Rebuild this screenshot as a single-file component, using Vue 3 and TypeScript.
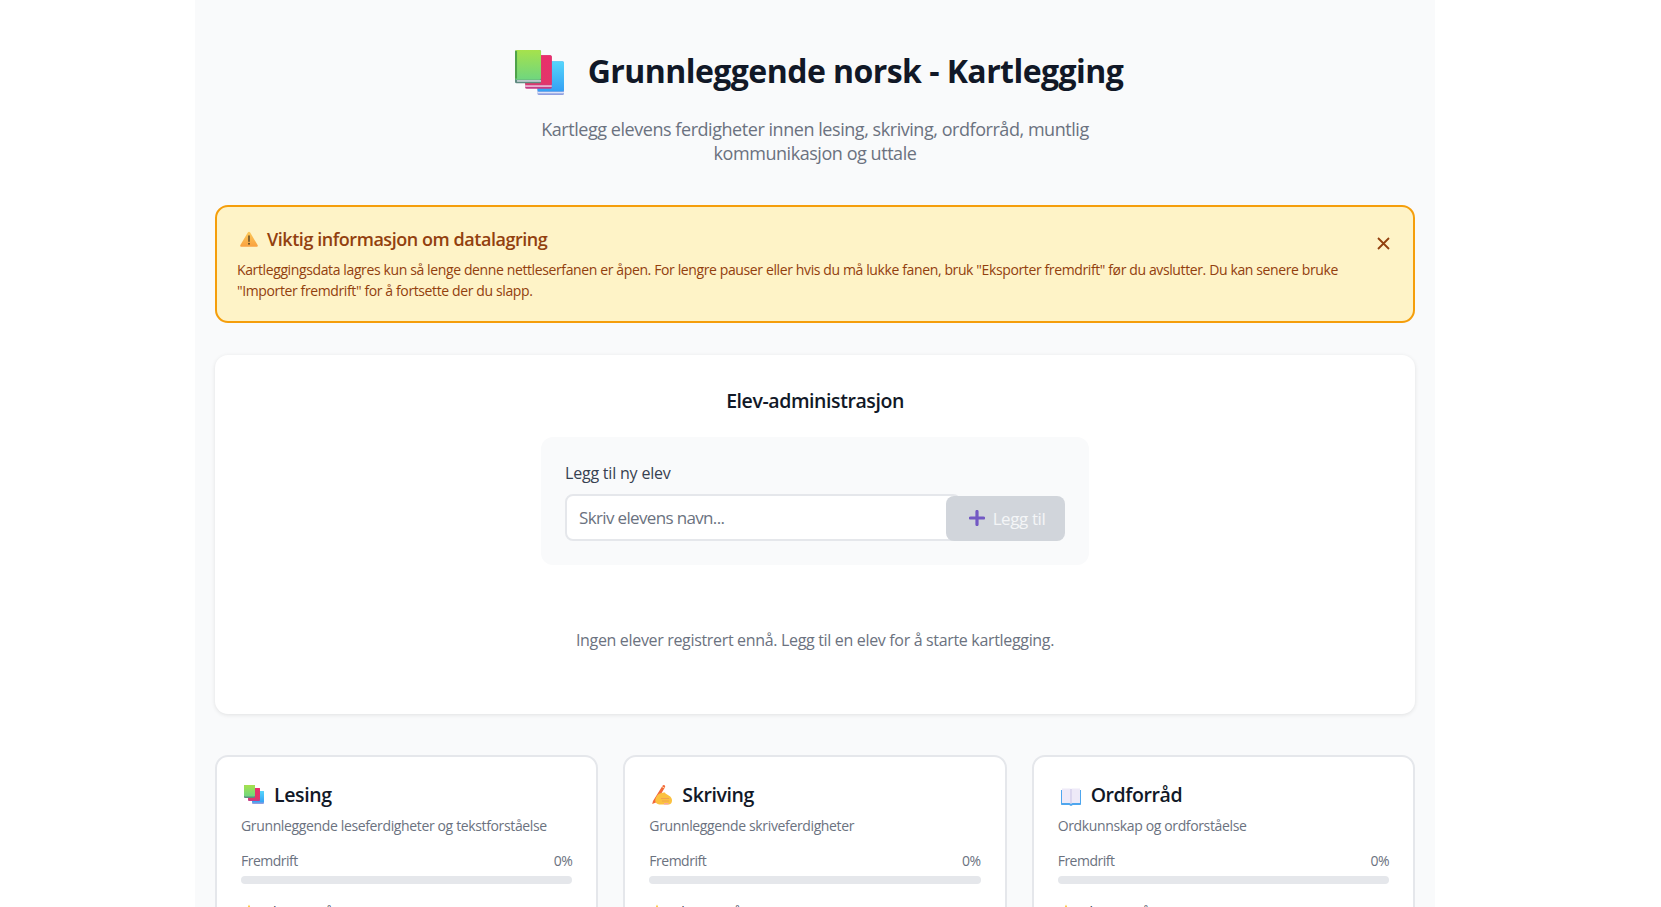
<script setup lang="ts">
import { ref } from 'vue'

interface Area {
  key: string
  title: string
  description: string
  progress: number
}

const areas: Area[] = [
  { key: 'books', title: 'Lesing', description: 'Grunnleggende leseferdigheter og tekstforståelse', progress: 0 },
  { key: 'hand', title: 'Skriving', description: 'Grunnleggende skriveferdigheter', progress: 0 },
  { key: 'book', title: 'Ordforråd', description: 'Ordkunnskap og ordforståelse', progress: 0 }
]

const studentName = ref('')
const showNotice = ref(true)
</script>

<template>
  <div class="page">
    <main class="container">
      <header class="header">
        <h1 class="title">
          <svg class="title-icon" viewBox="0 0 48 45" aria-hidden="true">
            <defs>
              <linearGradient id="bookGreen" x1="0" y1="0" x2="0" y2="1">
                <stop offset="0" stop-color="#a6e24c" />
                <stop offset="1" stop-color="#6fd67f" />
              </linearGradient>
              <linearGradient id="bookRed" x1="0" y1="0" x2="0" y2="1">
                <stop offset="0" stop-color="#ea2f6b" />
                <stop offset="1" stop-color="#e2366a" />
              </linearGradient>
              <linearGradient id="bookBlue" x1="0" y1="0" x2="0" y2="1">
                <stop offset="0" stop-color="#56d6fb" />
                <stop offset="1" stop-color="#35a0f4" />
              </linearGradient>
            </defs>
            <rect x="22" y="11" width="26" height="33" rx="1.5" fill="#8f9fe0" />
            <rect x="22" y="11" width="26" height="29.500" rx="1.5" fill="url(#bookBlue)" />
            <rect x="22" y="41" width="26" height="1.4" fill="#dfe3f7" />
            <rect x="10" y="5" width="26" height="33" rx="1.5" fill="#c43c87" />
            <rect x="10" y="5" width="26" height="29" rx="1.5" fill="url(#bookRed)" />
            <rect x="10" y="34.6" width="26" height="1.4" fill="#f2cfe0" />
            <rect x="0" y="0" width="25.5" height="32.5" rx="1.5" fill="#5f8a80" />
            <rect x="0" y="0" width="25.5" height="29" rx="1.5" fill="url(#bookGreen)" />
            <rect x="0" y="1" width="2" height="27" fill="#4fa24a" />
            <rect x="2" y="29.6" width="23.5" height="1.4" fill="#d9dfe4" />
          </svg>
          <span>Grunnleggende norsk - Kartlegging</span>
        </h1>
        <p class="subtitle">Kartlegg elevens ferdigheter innen lesing, skriving, ordforråd, muntlig kommunikasjon og uttale</p>
      </header>

      <section v-if="showNotice" class="notice">
        <div class="notice-body">
          <h3 class="notice-title">
            <svg class="notice-icon" viewBox="0 0 18 16" aria-hidden="true">
              <defs>
                <linearGradient id="warnFill" x1="0" y1="0" x2="0" y2="1">
                  <stop offset="0" stop-color="#fcc95a" />
                  <stop offset="1" stop-color="#f9a03f" />
                </linearGradient>
              </defs>
              <path d="M9 .8c.5 0 .9.3 1.2.7l7.4 12.6c.5.8-.1 1.7-1 1.7H1.4c-.9 0-1.5-.9-1-1.7L7.8 1.5C8.1 1.100 8.5.8 9 .8z" fill="url(#warnFill)" />
              <path d="M9 5v5.200" stroke="#5f4a24" stroke-width="1.500" stroke-linecap="round" fill="none" />
              <circle cx="9" cy="12.800" r="1" fill="#5f4a24" />
            </svg>
            <span>Viktig informasjon om datalagring</span>
          </h3>
          <p class="notice-text">Kartleggingsdata lagres kun så lenge denne nettleserfanen er åpen. For lengre pauser eller hvis du må lukke fanen, bruk "Eksporter fremdrift" før du avslutter. Du kan senere bruke "Importer fremdrift" for å fortsette der du slapp.</p>
        </div>
        <button class="notice-close" type="button" aria-label="Lukk" @click="showNotice = false">
          <svg viewBox="0 0 13 13" width="13" height="13" aria-hidden="true">
            <path d="M1 1l11 11M12 1L1 12" stroke="#92400e" stroke-width="1.800" fill="none" />
          </svg>
        </button>
      </section>

      <section class="admin">
        <h2 class="admin-title">Elev-administrasjon</h2>
        <div class="add-box">
          <label class="add-label" for="student">Legg til ny elev</label>
          <div class="add-row">
            <input id="student" v-model="studentName" class="add-input" type="text" placeholder="Skriv elevens navn...">
            <button class="add-button" type="button" disabled>
              <svg viewBox="0 0 16 16" width="16" height="16" aria-hidden="true">
                <path d="M8 1.500v13M1.500 8h13" stroke="#7359c4" stroke-width="3.200" stroke-linecap="round" fill="none" />
              </svg>
              <span>Legg til</span>
            </button>
          </div>
        </div>
        <p class="empty">Ingen elever registrert ennå. Legg til en elev for å starte kartlegging.</p>
      </section>

      <section class="areas">
        <article v-for="area in areas" :key="area.key" class="area">
          <h3 class="area-title">
            <svg v-if="area.key === 'books'" class="area-icon" viewBox="0 0 22 22" aria-hidden="true">
              <rect x="9" y="7" width="12" height="13" rx="1" fill="#8f9fe0" />
              <rect x="9" y="7" width="12" height="11.500" rx="1" fill="url(#bookBlue)" />
              <rect x="5" y="4" width="12" height="13" rx="1" fill="#c43c87" />
              <rect x="5" y="4" width="12" height="11.500" rx="1" fill="url(#bookRed)" />
              <rect x="1" y="1" width="11" height="13" rx="1" fill="#5f8a80" />
              <rect x="1" y="1" width="11" height="11.500" rx="1" fill="url(#bookGreen)" />
            </svg>
            <svg v-else-if="area.key === 'hand'" class="area-icon" viewBox="0 0 22 22" aria-hidden="true">
              <path d="M2 17L11.500 1.800c.4-.7 1.300-.9 2-.5s.9 1.300.5 2L5 18.500 1.200 20z" fill="#f2693a" />
              <path d="M11 2.600l2.800 1.700" stroke="#fdd7a8" stroke-width="1" fill="none" />
              <path d="M5 13.500c1-2.200 2.600-3.800 4.500-4.200l3.500-.8c.8-.2 1.500.3 1.500 1l4 2.500c1.500 1 2.500 2.500 2.500 4.500 0 2.500-1.500 4-3.500 4H10c-2.500 0-4.500-.3-5.500-2.500-.5-1.300-.2-3 .5-4.500z" fill="#fbc13f" />
              <path d="M10 14.500h8M11 17h7" stroke="#f0a24f" stroke-width="1" fill="none" />
              <path d="M13 19h4.500v1.500H13z" fill="#f7a6a0" />
            </svg>
            <svg v-else class="area-icon" viewBox="0 0 22 22" aria-hidden="true">
              <path d="M1 6h20v14c0 .6-.4 1-1 1h-7.500l-.5.800h-2l-.5-.8H2c-.6 0-1-.4-1-1z" fill="#4ea6ee" />
              <path d="M2 4.500h8.200c.4 0 .8.200.8.600.1-.4.4-.6.8-.6H20v14.500h-7.500l-1.500.8-1.500-.8H2z" fill="#eeeaf8" />
              <path d="M11 5v14.500" stroke="#c9c3e6" stroke-width="1" fill="none" />
            </svg>
            <span>{{ area.title }}</span>
          </h3>
          <p class="area-desc">{{ area.description }}</p>
          <div class="progress-head">
            <span>Fremdrift</span>
            <span>{{ area.progress }}%</span>
          </div>
          <div class="progress-track">
            <div class="progress-fill" :style="{ width: area.progress + '%' }"></div>
          </div>
          <div class="level">
            <svg viewBox="0 0 16 16" width="16" height="16" aria-hidden="true">
              <path d="M8 .5l2.300 4.900 5.200.7-3.800 3.700.9 5.300L8 12.500l-4.600 2.600.9-5.300L.5 6.100l5.200-.7z" fill="#fcc93f" />
            </svg>
            <span>Ukjent nivå</span>
          </div>
        </article>
      </section>
    </main>
  </div>
</template>

<style>
html {
  scrollbar-width: none;
}

body {
  background: #fff;
}
</style>

<style scoped>
.page {
  width: 1630px;
  font-family: "Open Sans", "Noto Sans", sans-serif;
  color: #111827;
}

.container {
  box-sizing: border-box;
  width: 1240px;
  min-height: 907px;
  margin: 0 auto;
  padding: 47px 20px 40px;
  background: #f9fafb;
}

.header {
  display: flex;
  flex-direction: column;
  align-items: center;
  margin-bottom: 39px;
}

.title {
  display: flex;
  align-items: center;
  gap: 24px;
  margin: 0;
  padding-left: 8px;
  font-size: 32px;
  line-height: 48px;
  font-weight: 700;
  letter-spacing: -0.55px;
  color: #111827;
}

.title-icon {
  width: 49px;
  height: 46px;
  margin: 2px 0 -2px;
  flex: none;
}

.subtitle {
  width: 600px;
  margin: 22px 0 0;
  font-size: 18px;
  line-height: 24.400px;
  letter-spacing: -0.45px;
  text-align: center;
  color: #6b7280;
}

.notice {
  box-sizing: border-box;
  display: flex;
  align-items: flex-start;
  justify-content: space-between;
  height: 118px;
  padding: 20px 23px 0 20px;
  background: #fef3c7;
  border: 2px solid #f59e0b;
  border-radius: 13px;
}

.notice-body {
  width: 1110px;
}

.notice-title {
  display: flex;
  align-items: center;
  gap: 9px;
  margin: 0 0 8px;
  padding-left: 3px;
  font-size: 18px;
  line-height: 24px;
  font-weight: 600;
  letter-spacing: -0.45px;
  color: #92400e;
}

.notice-icon {
  width: 18px;
  height: 16px;
  flex: none;
}

.notice-text {
  margin: 0;
  font-size: 14px;
  line-height: 21px;
  letter-spacing: -0.38px;
  color: #92400e;
}

.notice-close {
  display: flex;
  margin: 10px 0 0;
  padding: 0;
  border: none;
  background: none;
  cursor: pointer;
}

.admin {
  box-sizing: border-box;
  display: flex;
  flex-direction: column;
  align-items: center;
  height: 359px;
  margin-top: 32px;
  padding-top: 31px;
  background: #fff;
  border-radius: 13px;
  box-shadow: 0 1px 4px rgba(0, 0, 0, 0.1);
}

.admin-title {
  margin: 0;
  font-size: 19.500px;
  line-height: 30px;
  font-weight: 600;
  letter-spacing: -0.42px;
  color: #111827;
}

.add-box {
  box-sizing: border-box;
  width: 548px;
  height: 128px;
  margin-top: 21px;
  padding: 24px;
  background: #f9fafb;
  border-radius: 12px;
}

.add-label {
  display: block;
  font-size: 16px;
  line-height: 24px;
  letter-spacing: -0.2px;
  color: #374151;
}

.add-row {
  display: flex;
  align-items: flex-start;
  margin-top: 9px;
}

.add-input {
  box-sizing: border-box;
  flex: none;
  width: 396px;
  height: 47px;
  padding: 0 12px;
  border: 2px solid #e5e7eb;
  border-radius: 8px;
  background: #fff;
  font-family: inherit;
  font-size: 17px;
  letter-spacing: -0.65px;
  color: #111827;
  outline: none;
}

.add-input::placeholder {
  color: #6b7280;
  opacity: 1;
}

.add-button {
  box-sizing: border-box;
  display: flex;
  align-items: center;
  justify-content: center;
  gap: 8px;
  flex: none;
  width: 119px;
  height: 45px;
  margin: 2px 0 0 -15px;
  padding: 0 0 0 3px;
  border: none;
  border-radius: 8px;
  background: #d1d5db;
  font-family: inherit;
  font-size: 17px;
  letter-spacing: -0.4px;
  color: #f4f5f7;
}

.empty {
  margin: 63px 0 0;
  font-size: 16px;
  line-height: 24px;
  letter-spacing: -0.33px;
  color: #6b7280;
}

.areas {
  display: grid;
  grid-template-columns: repeat(3, 1fr);
  gap: 25px;
  margin-top: 41px;
}

.area {
  box-sizing: border-box;
  padding: 23px 24px 26px;
  background: #fff;
  border: 2px solid #e5e7eb;
  border-radius: 13px;
}

.area-title {
  display: flex;
  align-items: center;
  gap: 9px;
  margin: 0;
  padding-left: 2px;
  font-size: 19.500px;
  line-height: 30px;
  font-weight: 600;
  letter-spacing: -0.4px;
  color: #111827;
}

.area-icon {
  width: 22px;
  height: 22px;
  flex: none;
}

.area-desc {
  margin: 6px 0 0;
  font-size: 14px;
  line-height: 20px;
  letter-spacing: -0.36px;
  color: #6b7280;
}

.progress-head {
  display: flex;
  justify-content: space-between;
  margin-top: 15px;
  font-size: 14px;
  line-height: 20px;
  letter-spacing: -0.5px;
  color: #6b7280;
}

.progress-track {
  height: 8px;
  margin-top: 5px;
  background: #e5e7eb;
  border-radius: 4px;
  overflow: hidden;
}

.progress-fill {
  height: 100%;
  background: #3b82f6;
}

.level {
  display: flex;
  align-items: center;
  gap: 6px;
  margin-top: 18px;
  font-size: 14px;
  line-height: 20px;
  letter-spacing: -0.3px;
  color: #374151;
}
</style>
